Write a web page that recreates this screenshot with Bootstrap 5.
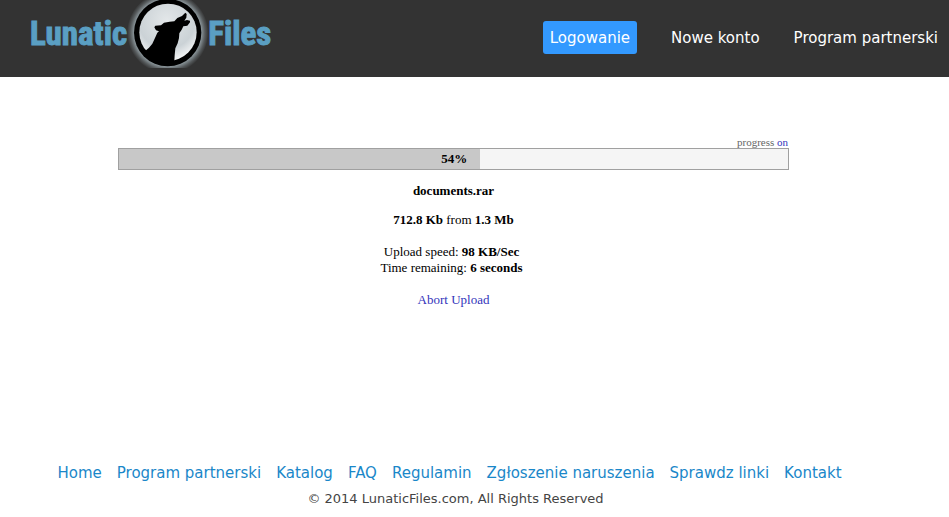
<!DOCTYPE html>
<html lang="pl">
<head>
<meta charset="utf-8">
<meta name="viewport" content="width=device-width, initial-scale=1">
<title>LunaticFiles</title>
<link href="https://cdn.jsdelivr.net/npm/bootstrap@5.3.0/dist/css/bootstrap.min.css" rel="stylesheet">
<style>
body { font-family: "DejaVu Sans", Verdana, sans-serif; font-size: 15px; background: #fff; }
.site-header { background: #333; min-height: 77px; padding: 0 3px 0 30px; }
.brand-logo { color: #5a9fc3; font: bold 33px/40px "Liberation Sans Narrow", "Roboto Condensed", "Liberation Sans", sans-serif; -webkit-text-stroke: 1px #5a9fc3; height: 68px; }
.brand-moon { width: 85px; height: 68px; margin: 0 -2px; -webkit-text-stroke: 0; }
.site-nav { gap: 18px; padding-top: 21px; }
.site-nav .nav-link { color: #fff; padding: 1px 8px 0; line-height: 32px; white-space: nowrap; }
.site-nav .login-link { background: #39f; border-radius: 3px; padding: 1px 7px 0; margin-right: 8px; }
.upload-area { font: 13px/16px "Liberation Serif", "Times New Roman", serif; color: #000; padding: 60px 42px 0 0; }
.upload-box { width: 671px; max-width: 100%; }
.upload-box a { color: #33b; }
.progress-toggle { font-size: 11px; line-height: 11px; color: #666; padding-right: 1px; }
.upload-progress { height: 22px; background: #f5f5f5; border: 1px solid #a0a0a0; border-radius: 0; font-size: 13px; }
.upload-progress .progress-bar { background: #c8c8c8; color: #000; transition: none; }
.upload-progress .percent { padding-right: 13px; }
.upload-stats { gap: 16px; padding-top: 13px; }
.upload-name { margin-bottom: -3px; }
.upload-rates { padding-right: 4px; }
.site-footer { padding: 0 50px 8px 0; }
.footer-links { gap: 4px 15px; }
.footer-links a { color: #1a87c9; line-height: 24px; }
.copyright { font-size: 13px; line-height: 20px; color: #444; padding: 4px 0 0 12px; }
</style>
</head>
<body class="min-vh-100 d-flex flex-column">
<header class="site-header d-flex justify-content-between align-items-start">
  <a href="#" class="brand-logo d-flex align-items-center text-decoration-none" aria-label="Lunatic Files">
    <span>Lunatic</span>
    <svg class="brand-moon flex-shrink-0" viewBox="0 0 255 204" aria-hidden="true">
      <defs>
        <radialGradient id="halo"><stop offset=".82" stop-color="#a5b3b9" stop-opacity=".8"/><stop offset=".92" stop-color="#a5b3b9" stop-opacity=".3"/><stop offset="1" stop-color="#a5b3b9" stop-opacity="0"/></radialGradient>
        <radialGradient id="moon" cx=".48" cy=".3" r=".75"><stop offset="0" stop-color="#e3e7e9"/><stop offset=".65" stop-color="#cbd2d6"/><stop offset="1" stop-color="#fff"/></radialGradient>
      </defs>
      <circle cx="128" cy="98" r="122" fill="url(#halo)"/>
      <circle cx="128" cy="98" r="101" fill="#000"/>
      <circle cx="129" cy="97" r="86" fill="url(#moon)"/>
      <path d="M55 145 63 151 72 143 82 131 91 112 97 98 102 94 93 91 88 82 91 77 108 76 117 68 134 65 148 64 157 54 171 48 181 38 185 42 184 53 178 62 186 60 195 62 195 67 187 77 175 79 170 89 163 100 162 114 158 130 151 145 149 166 148 183 125 188 95 180 70 165Z"/>
    </svg>
    <span>Files</span>
  </a>
  <nav class="site-nav nav flex-nowrap" aria-label="Menu">
    <a class="nav-link login-link" href="#">Logowanie</a>
    <a class="nav-link" href="#">Nowe konto</a>
    <a class="nav-link" href="#">Program partnerski</a>
  </nav>
</header>
<main class="upload-area flex-grow-1">
  <div class="upload-box mx-auto text-center">
    <div class="progress-toggle text-end">progress <a href="#" class="text-decoration-none">on</a></div>
    <div class="progress upload-progress" role="progressbar" aria-label="Upload progress" aria-valuenow="54" aria-valuemin="0" aria-valuemax="100">
      <div class="progress-bar text-end" style="width:54%"><b class="percent">54%</b></div>
    </div>
    <div class="upload-stats d-flex flex-column">
      <b class="upload-name">documents.rar</b>
      <div><b>712.8 Kb</b> from <b>1.3 Mb</b></div>
      <div class="upload-rates">Upload speed: <b>98 KB/Sec</b><br>Time remaining: <b>6 seconds</b></div>
      <div><a href="#" class="text-decoration-none">Abort Upload</a></div>
    </div>
  </div>
</main>
<footer class="site-footer text-center">
  <nav class="footer-links d-flex flex-wrap justify-content-center" aria-label="Stopka">
    <a href="#" class="text-decoration-none">Home</a>
    <a href="#" class="text-decoration-none">Program partnerski</a>
    <a href="#" class="text-decoration-none">Katalog</a>
    <a href="#" class="text-decoration-none">FAQ</a>
    <a href="#" class="text-decoration-none">Regulamin</a>
    <a href="#" class="text-decoration-none">Zgłoszenie naruszenia</a>
    <a href="#" class="text-decoration-none">Sprawdz linki</a>
    <a href="#" class="text-decoration-none">Kontakt</a>
  </nav>
  <div class="copyright">© 2014 LunaticFiles.com, All Rights Reserved</div>
</footer>
<script src="https://cdn.jsdelivr.net/npm/bootstrap@5.3.0/dist/js/bootstrap.bundle.min.js"></script>
</body>
</html>
